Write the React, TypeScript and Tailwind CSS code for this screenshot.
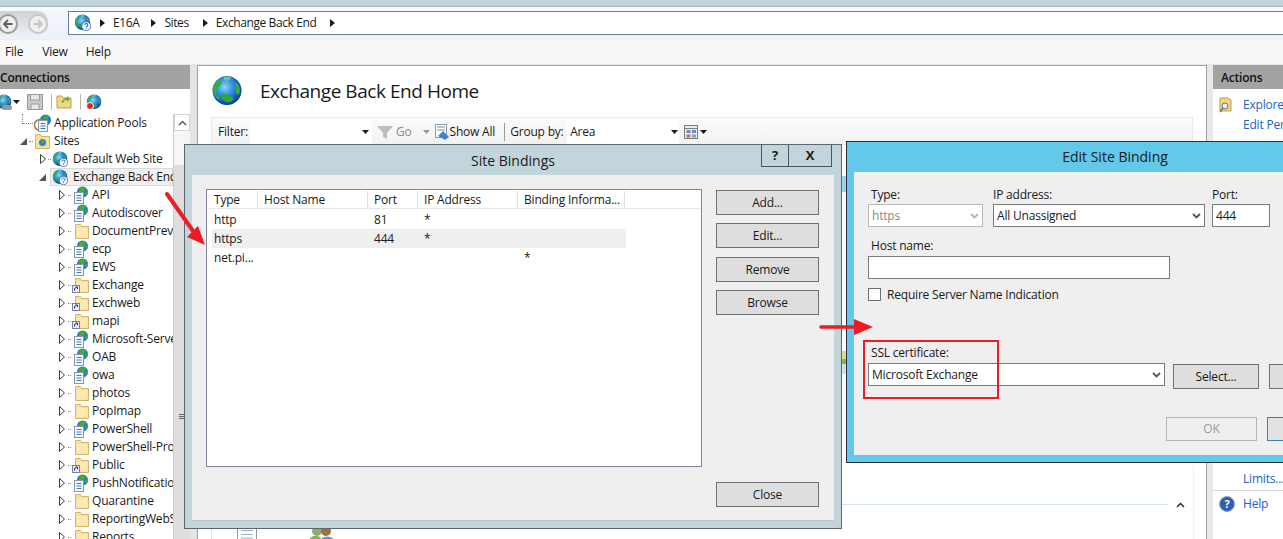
import React from "react";

const Globe: React.FC<{ size?: number; badge?: boolean }> = ({ size = 16, badge }) => (
  <svg width={size} height={size} viewBox="0 0 32 32" className="shrink-0">
    <defs>
      <radialGradient id="sea" cx="0.42" cy="0.38" r="0.68">
        <stop offset="0" stopColor="#8fd8f8" />
        <stop offset="0.35" stopColor="#3d9ce8" />
        <stop offset="0.75" stopColor="#1656c0" />
        <stop offset="1" stopColor="#0a2f86" />
      </radialGradient>
    </defs>
    <circle cx="16" cy="15.500" r="14.500" fill="url(#sea)" />
    <path d="M3 11c1-3 3-5 6-6l2 2-2 4-3 2-1 5 1 3 3 1-1 3c-3-2-5-5-6-9z" fill="#35b03c" />
    <path d="M10 20c3-2 7-1 10 1l3 3-3 3-5 0-4-3z" fill="#2fa53a" />
    <path d="M25 7c2 2 4 5 4 8l-1 5-3-2 0-5-1-4z" fill="#36ad3e" />
    <path d="M13 2l6 0 1 2-4 2-3-1z" fill="#6ec97a" />
    {badge && (
      <>
        <circle cx="23" cy="23" r="8.500" fill="#f4f8fd" stroke="#2a5fb0" strokeWidth="1.500" />
        <path d="M20 21c0-4 6-4 6 0 0 2-3 2-3 4M23 27v1.500" stroke="#2a5fb0" strokeWidth="2" fill="none" />
      </>
    )}
  </svg>
);

const AppIcon: React.FC = () => (
  <svg width="18" height="18" viewBox="0 0 18 18" className="shrink-0">
    <circle cx="10.500" cy="6" r="5.500" fill="#2a74d0" />
    <path d="M7 3c2-2 5-2 7-1l-1 3-3 1-1 3-2-2z" fill="#3fae3a" />
    <path d="M13 6l3-1 0 3-2 2z" fill="#3fae3a" />
    <rect x="2.500" y="6.500" width="9" height="11" fill="#f5f8fb" stroke="#8b98a8" />
    <path d="M4.500 9.500h5M4.500 12h5M4.500 14.500h5" stroke="#3d7fb5" />
  </svg>
);

const PoolsIcon: React.FC = () => (
  <svg width="18" height="18" viewBox="0 0 18 18" className="shrink-0">
    <circle cx="11.500" cy="6" r="5.500" fill="#2a74d0" />
    <path d="M8 3c2-2 5-2 7-1l-1 3-3 1z" fill="#3fae3a" />
    <circle cx="6" cy="11" r="5.500" fill="none" stroke="#c46a5c" strokeWidth="1.500" />
    <rect x="4.500" y="6.500" width="9" height="11" fill="#f5f8fb" stroke="#8b98a8" />
    <path d="M6.500 9.500h5M6.500 12h5M6.500 14.500h5" stroke="#3d7fb5" />
  </svg>
);

const Folder: React.FC<{ shortcut?: boolean }> = ({ shortcut }) => (
  <svg width="18" height="16" viewBox="0 0 18 16" className="shrink-0">
    <path d="M3.500 3.500v-2h5l1 2h7v12h-13z" fill="#f8e09a" stroke="#d2b56c" />
    <path d="M4.500 5h11v9.500h-11z" fill="#fbe9b4" />
    {shortcut && (
      <>
        <rect x="0.500" y="8.500" width="7" height="7" fill="#e8ecf5" stroke="#7c7fa8" />
        <path d="M2.500 13.500v-2l2-1M3.500 10h2v2" stroke="#242a80" fill="none" />
      </>
    )}
  </svg>
);

const SitesFolder: React.FC = () => (
  <svg width="18" height="16" viewBox="0 0 18 16" className="shrink-0">
    <path d="M1.500 3.500v-2h5l1 2h8v12h-14z" fill="#f8e09a" stroke="#d2b56c" />
    <circle cx="8.500" cy="9.500" r="3.500" fill="#2f7fcc" />
    <path d="M6.500 8l3-1.500 1 2-2 3z" fill="#46ad3d" />
  </svg>
);

const Closed: React.FC = () => (
  <svg width="6" height="10" viewBox="0 0 6 10" className="shrink-0">
    <path d="M0.500 0.500l5 4.500-5 4.500z" fill="#fff" stroke="#404040" />
  </svg>
);

const Open: React.FC = () => (
  <svg width="7" height="7" viewBox="0 0 7 7" className="shrink-0">
    <path d="M7 0v7h-7z" fill="#555" />
  </svg>
);

const Dots: React.FC<{ w: string }> = ({ w }) => <span className={`${w} border-t border-dotted border-[#8a8a8a] shrink-0`} />;

const SmallCaret: React.FC<{ color?: string }> = ({ color = "#1a1a1a" }) => (
  <svg width="7" height="4" viewBox="0 0 7 4" className="shrink-0">
    <path d="M0 0h7l-3.500 4z" fill={color} />
  </svg>
);

const Crumb: React.FC = () => (
  <svg width="5" height="8" viewBox="0 0 5 8" className="shrink-0">
    <path d="M0 0l5 4-5 4z" fill="#1a1a1a" />
  </svg>
);

const SelectChevron: React.FC<{ color?: string }> = ({ color = "#555" }) => (
  <svg width="9" height="6" viewBox="0 0 9 6" className="shrink-0">
    <path d="M1 1l3.500 3.500L8 1" stroke={color} strokeWidth="1.800" fill="none" />
  </svg>
);

const children: { label: string; icon: "app" | "folder" | "short" }[] = [
  { label: "API", icon: "app" },
  { label: "Autodiscover", icon: "app" },
  { label: "DocumentPreview", icon: "folder" },
  { label: "ecp", icon: "app" },
  { label: "EWS", icon: "app" },
  { label: "Exchange", icon: "short" },
  { label: "Exchweb", icon: "short" },
  { label: "mapi", icon: "short" },
  { label: "Microsoft-Server-ActiveSync", icon: "app" },
  { label: "OAB", icon: "app" },
  { label: "owa", icon: "app" },
  { label: "photos", icon: "folder" },
  { label: "PopImap", icon: "folder" },
  { label: "PowerShell", icon: "app" },
  { label: "PowerShell-Proxy", icon: "folder" },
  { label: "Public", icon: "short" },
  { label: "PushNotifications", icon: "app" },
  { label: "Quarantine", icon: "folder" },
  { label: "ReportingWebService", icon: "folder" },
  { label: "Reports", icon: "folder" },
];

const Tree: React.FC = () => (
  <div className="w-[173px] h-full overflow-hidden whitespace-nowrap text-[12px] text-[#1a1a1a] bg-white">
    <div className="h-[18px] flex items-center pl-[23px] relative">
      <span className="absolute left-[22px] top-0 h-[10px] border-l border-dotted border-[#8a8a8a]" />
      <Dots w="w-[10px]" />
      <span className="ml-[1px] w-[20px] shrink-0"><PoolsIcon /></span>
      <span>Application Pools</span>
    </div>
    <div className="h-[18px] flex items-center pl-[20px]">
      <Open />
      <Dots w="ml-[2px] w-[4px]" />
      <span className="ml-[1px] w-[20px] shrink-0"><SitesFolder /></span>
      <span>Sites</span>
    </div>
    <div className="h-[18px] flex items-center pl-[40px]">
      <Closed />
      <Dots w="ml-[2px] w-[3px]" />
      <span className="ml-[1px] w-[21px] shrink-0"><Globe badge /></span>
      <span>Default Web Site</span>
    </div>
    <div className="h-[18px] flex items-center pl-[39px]">
      <Open />
      <span className="ml-[4px] h-[18px] flex-1 min-w-0 flex items-center bg-[#f0f0f0] border border-[#d9d9d9] pl-[1px]">
        <span className="w-[21px] shrink-0"><Globe badge /></span>
        <span>Exchange Back End</span>
      </span>
    </div>
    {children.map((c) => (
      <div key={c.label} className="h-[18px] flex items-center pl-[59px]">
        <Closed />
        <Dots w="ml-[3px] w-[3px]" />
        <span className="w-[21px] pl-[1px] shrink-0">
          {c.icon === "app" && <AppIcon />}
          {c.icon === "folder" && <Folder />}
          {c.icon === "short" && <Folder shortcut />}
        </span>
        <span>{c.label}</span>
      </div>
    ))}
  </div>
);

const Sidebar: React.FC = () => (
  <div className="w-[190px] h-full flex flex-col shrink-0">
    <div className="h-[24px] bg-[#a3a3a3] flex items-center pt-px font-semibold text-[12px] text-[#111] shrink-0">Connections</div>
    <div className="h-[25px] flex items-center shrink-0 bg-white overflow-hidden">
      <span className="-ml-[4px] relative shrink-0">
        <Globe size={16} />
        <span className="absolute left-[6px] bottom-0 w-[10px] h-[5px] rounded-full bg-[#8f9aa5]" />
      </span>
      <span className="ml-[1px]"><SmallCaret /></span>
      <svg width="16" height="16" viewBox="0 0 16 16" className="ml-[7px] shrink-0">
        <path d="M0.500 0.500h15v15h-15z" fill="#c9c9c9" stroke="#9a9a9a" />
        <path d="M3.500 1v5h9V1M4 15v-5h8v5" fill="#e8e8e8" stroke="#9a9a9a" />
      </svg>
      <span className="ml-[8px] w-px h-[16px] bg-[#b5b5b5] shrink-0" />
      <span className="ml-[4px] shrink-0">
        <svg width="16" height="15" viewBox="0 0 16 15">
          <path d="M1 2h5l1 2h8v10H1z" fill="#f3d77f" stroke="#bda055" />
          <path d="M5 8l4-4 2 0 0-2 3 3-3 3 0-2-2 0-2 3z" fill="#5bb33d" />
        </svg>
      </span>
      <span className="ml-[8px] w-px h-[16px] bg-[#b5b5b5] shrink-0" />
      <span className="ml-[5px] relative shrink-0">
        <Globe size={16} />
        <span className="absolute left-0 bottom-0 w-[8px] h-[8px] rounded-full bg-[#d8242c] border border-white" />
      </span>
    </div>
    <div className="flex-1 flex min-h-0">
      <Tree />
      <div className="w-[17px] h-full flex flex-col bg-[#f0f0f0] border-l border-[#cfcfcf]">
        <div className="h-[17px] bg-white border border-[#d4d4d4] flex items-center justify-center shrink-0">
          <svg width="9" height="6" viewBox="0 0 9 6">
            <path d="M1 5l3.500-3.500L8 5" stroke="#444" strokeWidth="1.200" fill="none" />
          </svg>
        </div>
        <div className="h-[34px] bg-[#f6f6f6] shrink-0" />
        <div className="flex-1 bg-[#dedede] flex flex-col items-center gap-[1px] pt-[249px]">
          <span className="w-[7px] h-px bg-[#666]" />
          <span className="w-[7px] h-px bg-[#666]" />
          <span className="w-[7px] h-px bg-[#666]" />
        </div>
      </div>
    </div>
  </div>
);

const Box: React.FC<{ className: string; children?: React.ReactNode }> = ({ className, children }) => (
  <div className={`bg-white flex items-center ${className}`}>{children}</div>
);

const MainPanel: React.FC = () => (
  <div className="relative w-[1010px] h-full border-t border-x border-[#a0a0a0] bg-white pl-[13px] shrink-0">
    <div className="h-[51px] flex items-center pb-px">
      <Globe size={32} />
      <span className="ml-[17px] text-[19px] tracking-[-0.45px] text-[#1a1a1a] leading-none">Exchange Back End Home</span>
    </div>
    <div className="w-[982px] h-[28px] border border-[#eaeaea] bg-gradient-to-b from-[#fbfbfb] to-[#f2f2f2] flex items-center pt-px text-[12px] text-[#1a1a1a] whitespace-nowrap">
      <span className="ml-[6px] w-[32px]">Filter:</span>
      <Box className="w-[122px] h-[24px] justify-end pr-[3px]"><SmallCaret /></Box>
      <svg width="16" height="16" viewBox="0 0 16 16" className="ml-[5px]">
        <path d="M0 2h16l-6 7v6l-4-2V9z" fill="#bdbdbd" />
      </svg>
      <span className="ml-[3px] text-[#8a8a8a]">Go</span>
      <span className="ml-[11px]"><SmallCaret color="#9a9a9a" /></span>
      <svg width="15" height="16" viewBox="0 0 15 16" className="ml-[5px]">
        <rect x="0.500" y="0.500" width="11" height="13" fill="#fff" stroke="#8a9aa8" />
        <path d="M2 3h8M2 6h8" stroke="#7c8c9c" />
        <path d="M3 12l5-5 2 2 4 4-4 3z" fill="#3f86cf" />
      </svg>
      <span>Show All</span>
      <span className="ml-[9px] w-px h-[18px] bg-[#999]" />
      <span className="ml-[5px] w-[57px]">Group by:</span>
      <Box className="w-[112px] h-[24px] justify-between pl-[3px] pr-[1px]">
        Area
        <SmallCaret />
      </Box>
      <svg width="14" height="14" viewBox="0 0 14 14" className="ml-[5px]">
        <rect x="0.500" y="0.500" width="13" height="13" fill="#eee" stroke="#7d7d7d" />
        <path d="M0 3.500h14" stroke="#7d7d7d" />
        <rect x="2.500" y="5" width="4" height="3" fill="#5b8ec9" />
        <rect x="8" y="5" width="4" height="3" fill="#5b8ec9" />
        <rect x="2.500" y="9.500" width="4" height="3" fill="#c96b5b" />
        <rect x="8" y="9.500" width="4" height="3" fill="#8aa0b5" />
      </svg>
      <span className="ml-[2px]"><SmallCaret /></span>
    </div>

    {/* scraps of the feature view that show between the two dialogs */}
    <span className="absolute left-[644px] top-[110px] w-[6px] h-[16px] bg-[#9fd0ea]" />
    <span className="absolute left-[644px] top-[285px] w-[6px] h-[8px] bg-[#e5d68a]" />
    <span className="absolute left-[644px] top-[293px] w-[6px] h-[5px] bg-[#6fc04a]" />
    <span className="absolute left-[644px] top-[298px] w-[6px] h-[10px] bg-[#cfe0ee]" />

    <div className="absolute left-[13px] right-[37px] top-[438px] border-t border-[#d5e5f2]" />
    <svg width="9" height="6" viewBox="0 0 9 6" className="absolute left-[978px] top-[436px]">
      <path d="M1 5l3.500-3.500L8 5" stroke="#222" strokeWidth="1.400" fill="none" />
    </svg>
    <div className="absolute left-[13px] top-[440px] bottom-0 border-l border-[#e3e3e3]" />
    <div className="absolute left-[995px] top-[400px] bottom-0 border-l border-[#f0f0f0]" />
    <div className="absolute left-[39px] top-[461px]">
      <svg width="20" height="14" viewBox="0 0 20 14">
        <rect x="0.500" y="0.500" width="19" height="14" fill="#fff" stroke="#9a9a9a" />
        <path d="M4 3.500h12M4 7.500h12M4 11h12" stroke="#9fb0c0" />
      </svg>
    </div>
    <div className="absolute left-[110px] top-[461px]">
      <svg width="28" height="14" viewBox="0 0 28 14">
        <circle cx="9" cy="4" r="5" fill="#8fa96a" />
        <circle cx="18" cy="4" r="5" fill="#a26d3c" />
        <path d="M1 14c1-6 8-6 11-4l2 4z" fill="#7fb65a" />
        <path d="M12 14c2-6 12-6 15 0z" fill="#5f9ad6" />
      </svg>
    </div>
  </div>
);

const Actions: React.FC = () => (
  <div className="w-[70px] h-full flex flex-col shrink-0 text-[12px] whitespace-nowrap overflow-hidden">
    <div className="h-[24px] bg-[#a3a3a3] flex items-center pt-px pl-[8px] font-semibold text-[#111] shrink-0">Actions</div>
    <div className="flex-1 bg-white text-[#1a63c8] relative">
      <div className="h-[20px] mt-[6px] flex items-center pl-[6px]">
        <svg width="15" height="17" viewBox="0 0 15 17" className="shrink-0">
          <path d="M1 1h8l3 2v11H1z" fill="#f3d77f" stroke="#bda055" />
          <circle cx="6" cy="9" r="3" fill="#e8eef5" stroke="#6b7280" />
          <path d="M4 11l-3 4" stroke="#6b7280" strokeWidth="1.500" />
        </svg>
        <span className="ml-[9px]">Explore</span>
      </div>
      <div className="h-[20px] flex items-center pl-[30px]">Edit Permissions...</div>
      <div className="mt-[9px] border-t border-[#bfbfbf]" />
      <div className="absolute left-[30px] top-[381px] h-[18px] flex items-center">Limits...</div>
      <div className="absolute left-0 right-0 top-[401px] border-t border-[#d6d6d6]" />
      <div className="absolute left-[6px] top-[406px] h-[18px] flex items-center">
        <span className="w-[16px] h-[16px] rounded-full bg-[#2f5fb5] border border-[#9aa5b5] text-white text-[11px] font-bold flex items-center justify-center shrink-0">?</span>
        <span className="ml-[8px]">Help</span>
      </div>
    </div>
  </div>
);

const Btn: React.FC<{ label: string; className?: string }> = ({ label, className = "" }) => (
  <div className={`w-[103px] h-[25px] bg-[#dedede] border border-[#707070] flex items-center justify-center text-[12px] text-[#1a1a1a] shrink-0 ${className}`}>
    {label}
  </div>
);

const Cell: React.FC<{ w: string; children?: React.ReactNode }> = ({ w, children }) => (
  <div className={`${w} pl-[6px] shrink-0 truncate`}>{children}</div>
);

const HeadSep: React.FC = () => <span className="w-px h-full bg-[#e3e3e3] shrink-0" />;

const SiteBindings: React.FC = () => (
  <div className="absolute left-[184px] top-[144px] w-[658px] h-[385px] border border-[#5c6670] bg-[#c1d5da] flex flex-col text-[12px] text-[#1a1a1a]">
    <div className="h-[30px] relative flex items-center justify-center text-[14px] tracking-normal shrink-0 pt-[1px]">
      Site Bindings
      <div className="absolute left-[576px] top-0 h-[22px] flex border border-t-0 border-[#4b5560]">
        <span className="w-[27px] flex items-center justify-center font-bold text-[13px] border-r border-[#4b5560]">?</span>
        <span className="w-[42px] flex items-center justify-center font-bold text-[13px]">X</span>
      </div>
    </div>
    <div className="flex-1 mx-[7px] mb-[7px] bg-[#efefef] flex pt-[14px] pl-[14px] pr-[14px] pb-[13px] border-b border-[#b5c7cc]">
      <div className="w-[496px] h-[278px] bg-white border border-[#85859a] self-start pl-[1px]">
        <div className="h-[19px] flex items-center pt-px border-b border-[#e8e8e8]">
          <Cell w="w-[49px]">Type</Cell>
          <HeadSep />
          <Cell w="w-[109px]">Host Name</Cell>
          <HeadSep />
          <Cell w="w-[49px]">Port</Cell>
          <HeadSep />
          <Cell w="w-[99px]">IP Address</Cell>
          <HeadSep />
          <Cell w="w-[106px]">Binding Informa...</Cell>
          <HeadSep />
        </div>
        <div className="h-[20px] flex items-center pt-px">
          <Cell w="w-[160px]">http</Cell>
          <Cell w="w-[50px]">81</Cell>
          <Cell w="w-[100px]">*</Cell>
        </div>
        <div className="h-[19px] flex items-center bg-[#efefef] ml-[4px] w-[414px]">
          <div className="w-[156px] pl-[2px] shrink-0">https</div>
          <Cell w="w-[50px]">444</Cell>
          <Cell w="w-[100px]">*</Cell>
        </div>
        <div className="h-[19px] flex items-center">
          <Cell w="w-[160px]">net.pi...</Cell>
          <Cell w="w-[50px]" />
          <Cell w="w-[100px]" />
          <Cell w="w-[100px]">*</Cell>
        </div>
      </div>
      <div className="ml-[14px] flex flex-col pt-px">
        <Btn label="Add..." />
        <Btn label="Edit..." className="mt-[8px]" />
        <Btn label="Remove" className="mt-[9px]" />
        <Btn label="Browse" className="mt-[8px]" />
        <Btn label="Close" className="mt-auto" />
      </div>
    </div>
  </div>
);

const Field: React.FC<{ className: string; children?: React.ReactNode }> = ({ className, children }) => (
  <div className={`h-[23px] bg-white border border-[#7a7a7a] flex items-center justify-between px-[3px] shrink-0 ${className}`}>{children}</div>
);

const EditBinding: React.FC = () => (
  <div className="absolute left-[846px] top-[141px] w-[538px] h-[322px] border border-[#2b2f33] bg-[#63c8ea] flex flex-col text-[12px] text-[#1a1a1a]">
    <div className="h-[30px] flex items-center justify-center text-[14px] tracking-normal pb-[1px] shrink-0">Edit Site Binding</div>
    <div className="flex-1 ml-[7px] mb-[7px] bg-[#efefef] pl-[14px] pt-[14px] flex flex-col">
      <div className="flex">
        <div className="w-[115px]">
          <div className="h-[18px] pl-[3px] pb-px flex items-center">Type:</div>
          <Field className="w-[115px] border-[#b9b9b9] text-[#8a8a8a]">
            https
            <SelectChevron color="#b5b5b5" />
          </Field>
        </div>
        <div className="w-[212px] ml-[10px]">
          <div className="h-[18px] pb-px flex items-center">IP address:</div>
          <Field className="w-[212px]">
            All Unassigned
            <SelectChevron />
          </Field>
        </div>
        <div className="w-[58px] ml-[7px]">
          <div className="h-[18px] pb-px flex items-center">Port:</div>
          <Field className="w-[58px]">444</Field>
        </div>
      </div>
      <div className="h-[20px] mt-[9px] pl-[3px] flex items-center">Host name:</div>
      <Field className="w-[302px]" />
      <div className="mt-[9px] h-[13px] flex items-center">
        <span className="w-[13px] h-[13px] bg-white border border-[#707070] shrink-0" />
        <span className="ml-[6px]">Require Server Name Indication</span>
      </div>
      <div className="h-[18px] mt-[44px] pl-[3px] pb-[2px] flex items-center">SSL certificate:</div>
      <div className="flex items-start">
        <Field className="w-[297px]">
          Microsoft Exchange
          <SelectChevron />
        </Field>
        <div className="w-[86px] h-[25px] mt-px ml-[8px] bg-[#dedede] border border-[#707070] flex items-center justify-center shrink-0">Select...</div>
        <div className="w-[86px] h-[25px] mt-px ml-[10px] bg-[#dedede] border border-[#707070] shrink-0" />
      </div>
      <div className="flex mt-[28px] ml-[298px]">
        <div className="w-[91px] h-[24px] border border-[#b5b5b5] bg-[#efefef] text-[#9a9a9a] flex items-center justify-center shrink-0">OK</div>
        <div className="w-[91px] h-[24px] ml-[10px] border border-[#3a7ebf] bg-[#e2e2e2] shrink-0" />
      </div>
    </div>
  </div>
);

const App: React.FC = () => (
  <div className="relative w-[1283px] h-[539px] overflow-hidden bg-[#f0f0f0] flex flex-col font-['Open_Sans',sans-serif] tracking-[-0.2px]">
    <div className="h-[7px] bg-[#c1d5da] border-b border-[#a9b9c4] shrink-0" />
    <div className="h-[33px] bg-gradient-to-b from-[#f6f9fd] to-[#e9f1fb] flex items-center shrink-0">
      <div className="w-[48px] h-[26px] flex items-center shrink-0 bg-gradient-to-b from-[#cfd3d8] to-[#eef1f5] rounded-r-[10px]">
        <span className="w-[20px] h-[20px] rounded-full border-2 border-[#9a9a9a] bg-[#eeeeee] flex items-center justify-center -ml-[2px] shrink-0">
          <svg width="12" height="12" viewBox="0 0 12 12">
            <path d="M10.500 6H2M6 2L2 6l4 4" stroke="#5f5f5f" strokeWidth="1.800" fill="none" />
          </svg>
        </span>
        <span className="ml-[10px] w-[20px] h-[20px] rounded-full border-2 border-[#c8c8c8] bg-[#f0f0f0] flex items-center justify-center shrink-0">
          <svg width="12" height="12" viewBox="0 0 12 12">
            <path d="M1.500 6H10M6 2l4 4-4 4" stroke="#c4c4c4" strokeWidth="1.800" fill="none" />
          </svg>
        </span>
      </div>
      <div className="ml-[20px] -mt-[2px] flex-1 h-[24px] bg-white border border-[#6c7a92] border-r-0 flex items-center pl-[5px] text-[12px] text-[#1a1a1a] whitespace-nowrap">
        <Globe size={17} badge />
        <span className="ml-[9px]"><Crumb /></span>
        <span className="ml-[8px] tracking-[-0.4px]">E16A</span>
        <span className="ml-[12px]"><Crumb /></span>
        <span className="ml-[8px] tracking-[-0.4px]">Sites</span>
        <span className="ml-[14px]"><Crumb /></span>
        <span className="ml-[8px] tracking-[-0.4px]">Exchange Back End</span>
        <span className="ml-[14px]"><Crumb /></span>
      </div>
    </div>
    <div className="h-[25px] bg-[#f8f8f8] flex items-center pl-[5px] text-[12px] text-[#1a1a1a] shrink-0 border-b border-[#e6e6e6] pb-px">
      <span>File</span>
      <span className="ml-[19px]">View</span>
      <span className="ml-[18px]">Help</span>
    </div>
    <div className="flex-1 flex min-h-0">
      <Sidebar />
      <div className="w-[7px] bg-[#e4e4e4] shrink-0" />
      <MainPanel />
      <div className="w-[6px] bg-[#e8e8e8] shrink-0" />
      <Actions />
    </div>

    <SiteBindings />
    <EditBinding />

    <div className="absolute left-[863px] top-[340px] w-[136px] h-[59px] border-2 border-[#ed1c24]" />
    <svg width="50" height="60" viewBox="0 0 50 60" className="absolute left-[160px] top-[190px]">
      <path d="M7 4l26 37" stroke="#ed1c24" strokeWidth="4" strokeLinecap="round" />
      <path d="M45 55L27 47 38 36z" fill="#ed1c24" />
    </svg>
    <svg width="60" height="20" viewBox="0 0 60 20" className="absolute left-[818px] top-[317px]">
      <path d="M3 10h34" stroke="#ed1c24" strokeWidth="3.500" strokeLinecap="round" />
      <path d="M36 2l19 8-19 8z" fill="#ed1c24" />
    </svg>
  </div>
);

export default App;
